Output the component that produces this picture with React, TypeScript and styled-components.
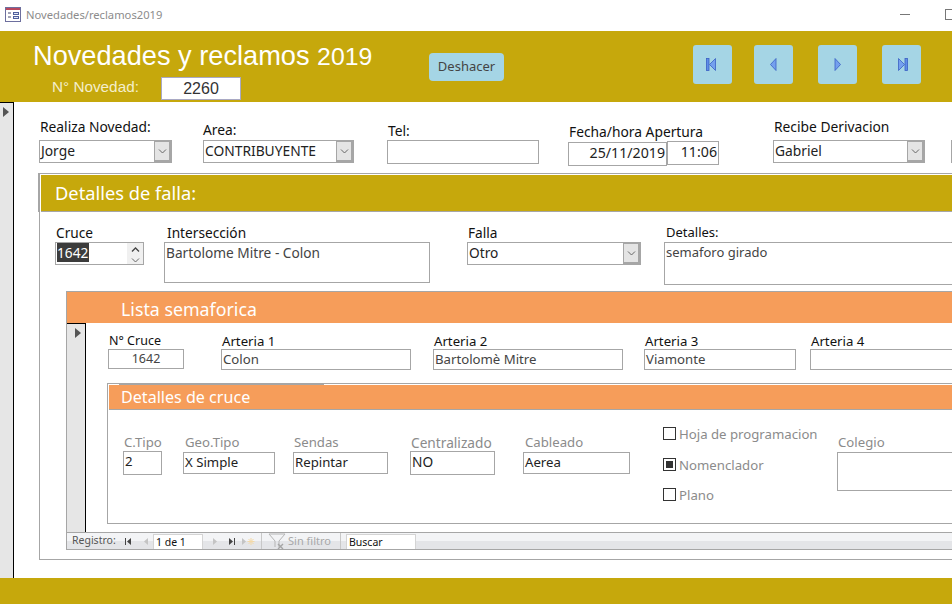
import * as React from 'react';
import styled, { createGlobalStyle } from 'styled-components';

const GOLD = '#c6a80c';
const ORANGE = '#f69d5a';
const LINE = '#a6a6a6';
const UI_FONT = '"Noto Sans", "Open Sans", sans-serif';

const GlobalStyle = createGlobalStyle`
  html, body {
    margin: 0;
    padding: 0;
    background: #fff;
  }
  body {
    font-family: ${UI_FONT};
  }
`;

const Page = styled.div`
  width: 952px;
  height: 604px;
  display: flex;
  flex-direction: column;
  overflow: hidden;
`;

const TitleBar = styled.div`
  height: 31px;
  flex: none;
  box-sizing: border-box;
  display: flex;
  align-items: center;
  padding: 0 0 3px 5px;
  gap: 5px;
`;

const TitleText = styled.span`
  font-size: 11.2px;
  color: #8c8c8c;
  flex: 1;
`;

const MinGlyph = styled.span`
  width: 10px;
  height: 1px;
  background: #777;
  margin-right: 30px;
`;

const MaxGlyph = styled.span`
  width: 10px;
  height: 9px;
  flex: none;
  border: 1px solid #777;
  margin-right: -5px;
`;

const Header = styled.div`
  height: 71px;
  flex: none;
  background: ${GOLD};
  display: flex;
  align-items: flex-start;
  padding-left: 33px;
`;

const TitleBlock = styled.div`
  width: 396px;
  flex: none;
`;

const Heading = styled.h1`
  margin: 10px 0 0;
  font: 400 27.2px/30px "Liberation Sans", Arial, sans-serif;
  color: #fff;
  white-space: nowrap;
`;

const HeadingYear = styled.span`
  font-size: 24.8px;
`;

const NumberRow = styled.div`
  display: flex;
  align-items: flex-start;
  margin: 5px 0 0 19px;
`;

const NumberLabel = styled.span`
  width: 109px;
  font: 400 15.3px/20px "Liberation Sans", Arial, sans-serif;
  color: #f4eecb;
`;

const NumberBox = styled.div`
  width: 80px;
  height: 23px;
  box-sizing: border-box;
  background: #fff;
  border: 1px solid #a9a9c4;
  text-align: center;
  font: 400 16px/21px "Liberation Sans", Arial, sans-serif;
  color: #333;
`;

const UndoButton = styled.div`
  width: 75px;
  height: 28px;
  margin-top: 22px;
  background: #a5d5e5;
  border-radius: 4px;
  text-align: center;
  font-size: 13px;
  line-height: 27px;
  color: #444;
`;

const NavButtons = styled.div`
  display: flex;
  margin: 14px 0 0 189px;
`;

const NavButton = styled.div<{ $gap: number }>`
  width: 39px;
  height: 39px;
  margin-left: ${(p) => p.$gap}px;
  background: #a5d5e5;
  border-radius: 3px;
  display: flex;
  align-items: center;
  justify-content: center;
`;

const NavSvg = styled.svg<{ $mirror: boolean; $nudge: number }>`
  transform: translateX(${(p) => p.$nudge}px) scaleX(${(p) => (p.$mirror ? -1 : 1)});
`;

const Main = styled.div`
  flex: 1;
  display: flex;
  min-height: 0;
`;

const RecordSelector = styled.div<{ $w: number }>`
  width: ${(p) => p.$w}px;
  flex: none;
  box-sizing: border-box;
  background: #e6e6e6;
  border-top: 1px solid #000;
  border-right: 1px solid #000;
  padding: 4px 0 0 ${(p) => (p.$w > 14 ? 8 : 3)}px;
`;

const Arrow = styled.div`
  width: 0;
  height: 0;
  border-left: 6px solid #555;
  border-top: 5px solid transparent;
  border-bottom: 5px solid transparent;
`;

const Content = styled.div`
  flex: 1;
  min-width: 0;
`;

const Row = styled.div<{ $h: number; $size: number }>`
  height: ${(p) => p.$h}px;
  display: flex;
  align-items: flex-start;
  font-size: ${(p) => p.$size}px;
`;

const Field = styled.div<{ $left: number; $top: number; $w: number; $size?: number }>`
  width: ${(p) => p.$w}px;
  flex: none;
  margin-left: ${(p) => p.$left}px;
  margin-top: ${(p) => p.$top}px;
  ${(p) => (p.$size ? `font-size: ${p.$size}px;` : '')}
`;

const Caption = styled.div<{ $inset?: number; $drop?: number; $muted?: boolean }>`
  line-height: 16px;
  height: 16px;
  white-space: nowrap;
  padding-left: ${(p) => p.$inset ?? 1}px;
  margin-bottom: ${(p) => p.$drop ?? 0}px;
  color: ${(p) => (p.$muted ? '#8b8b8b' : '#111')};
`;

const TextBox = styled.div<{ $h: number; $lh?: number; $dark?: boolean; $center?: boolean; $right?: boolean }>`
  height: ${(p) => p.$h}px;
  box-sizing: border-box;
  border: 1px solid ${LINE};
  background: #fff;
  padding: 0 1px;
  line-height: ${(p) => p.$lh ?? 20}px;
  white-space: nowrap;
  overflow: hidden;
  color: ${(p) => (p.$dark ? '#222' : '#444')};
  text-align: ${(p) => (p.$center ? 'center' : p.$right ? 'right' : 'left')};
`;

const ComboBox = styled.div`
  height: 23px;
  box-sizing: border-box;
  border: 1px solid ${LINE};
  background: #fff;
  display: flex;
  line-height: 19px;
  color: #222;
`;

const ComboValue = styled.div`
  flex: 1;
  padding-left: 1px;
  white-space: nowrap;
  overflow: hidden;
`;

const ComboDrop = styled.div`
  width: 17px;
  flex: none;
  box-sizing: border-box;
  border: 1px solid ${LINE};
  background: #e4e4e4;
  display: flex;
  align-items: center;
  justify-content: center;
  box-shadow: inset -1px -1px 0 ${LINE};
`;

const DateGroup = styled.div`
  display: flex;
  align-items: flex-start;
  font-size: 14.2px;
`;

const DatePart = styled.div<{ $w: number; $drop: number }>`
  width: ${(p) => p.$w}px;
  flex: none;
  margin-top: ${(p) => p.$drop}px;
`;

const Panel = styled.div`
  position: relative;
  width: 1000px;
  height: 387px;
  margin-left: 25px;
  box-sizing: border-box;
  border-top: 1px solid ${LINE};
  border-left: 1px solid ${LINE};
  border-bottom: 1px solid ${LINE};
  padding-top: 1px;

  &::before {
    content: '';
    position: absolute;
    left: -2px;
    top: -1px;
    width: 1px;
    height: 39px;
    background: ${LINE};
  }
`;

const PanelHeader = styled.div`
  height: 37px;
  box-sizing: border-box;
  background: ${GOLD};
  border-bottom: 1px solid ${LINE};
  margin-left: 1px;
  padding-left: 14px;
  font-size: 18.3px;
  line-height: 36px;
  color: #fff;
`;

const SpinBox = styled.div`
  height: 23px;
  box-sizing: border-box;
  border: 1px solid ${LINE};
  display: flex;
  align-items: flex-start;
  line-height: 19px;
  padding-left: 1px;
`;

const Selected = styled.span`
  width: 32px;
  height: 19px;
  background: #3c3c3c;
  color: #fff;
`;

const Spin = styled.div`
  width: 16px;
  height: 21px;
  margin-left: auto;
  background: #f0f0f0;
  display: flex;
  flex-direction: column;
  align-items: center;
  justify-content: space-between;
  padding: 4px 0 1px;
  box-sizing: border-box;
`;

const SubForm = styled.div`
  margin-left: 26px;
  border-top: 1px solid ${LINE};
  border-left: 1px solid ${LINE};
  height: 258px;
  display: flex;
  flex-direction: column;
`;

const SubHeader = styled.div`
  height: 31px;
  flex: none;
  background: ${ORANGE};
  padding-left: 54px;
  font-size: 17.8px;
  line-height: 34px;
  color: #fff;
`;

const SubBody = styled.div`
  height: 209px;
  flex: none;
  display: flex;
`;

const CrossPanel = styled.div`
  width: 900px;
  height: 141px;
  margin-left: 21px;
  box-sizing: border-box;
  border-top: 1px solid ${LINE};
  border-left: 1px solid ${LINE};
  border-bottom: 1px solid ${LINE};
  padding-top: 1px;
`;

const CrossHeader = styled.div`
  position: relative;
  height: 25px;
  margin-left: 1px;
  box-sizing: border-box;
  background: ${ORANGE};
  border-bottom: 1px solid ${LINE};
  padding-left: 12px;
  font-size: 16.1px;
  line-height: 24px;
  color: #fff;

  &::before {
    content: '';
    position: absolute;
    left: 10px;
    top: -1px;
    width: 205px;
    height: 1px;
    background: ${LINE};
  }
`;

const CheckColumn = styled.div`
  width: 174px;
  flex: none;
  margin: 17px 0 0 33px;
  display: flex;
  flex-direction: column;
  gap: 17px;
`;

const CheckRow = styled.div`
  height: 13.5px;
  display: flex;
  align-items: center;
  gap: 3px;
  color: #8b8b8b;
  white-space: nowrap;
`;

const CheckLabel = styled.span`
  margin-top: 1px;
`;

const CheckBox = styled.span<{ $on?: boolean }>`
  width: 13px;
  height: 13px;
  flex: none;
  box-sizing: border-box;
  border: 1px solid #333;
  display: flex;
  align-items: center;
  justify-content: center;

  &::after {
    content: '';
    width: 7px;
    height: 7px;
    background: ${(p) => (p.$on ? '#333' : 'transparent')};
  }
`;

const RecordBar = styled.div`
  height: 18px;
  flex: none;
  box-sizing: border-box;
  display: flex;
  align-items: flex-end;
  border-top: 1px solid ${LINE};
  border-bottom: 1px solid ${LINE};
  background: linear-gradient(#f3f4f6 0 50%, #e4e5e8 50% 100%);
  font-size: 10.5px;
  line-height: 15px;
  color: #555;
`;

const BarLabel = styled.span`
  margin-left: 5px;
  width: 52px;
  flex: none;
  height: 16px;
`;

const BarIcon = styled.span<{ $w: number; $left?: number }>`
  width: ${(p) => p.$w}px;
  margin-left: ${(p) => p.$left ?? 0}px;
  flex: none;
  height: 16px;
  display: flex;
  align-items: center;
  justify-content: center;
`;

const BarInput = styled.div<{ $w: number; $left: number }>`
  width: ${(p) => p.$w}px;
  height: 15px;
  flex: none;
  box-sizing: border-box;
  margin-left: ${(p) => p.$left}px;
  background: #fff;
  border: 1px solid #d4d4d4;
  border-bottom: 0;
  padding-left: 2px;
  line-height: 14px;
  color: #111;
`;

const BarSeparator = styled.span<{ $left: number }>`
  width: 1px;
  height: 16px;
  flex: none;
  margin-left: ${(p) => p.$left}px;
  background: #c8c8c8;
`;

const BarMuted = styled.span`
  width: 52px;
  margin-left: 1px;
  flex: none;
  height: 16px;
  font-size: 11px;
  color: #a8a8a8;
`;

const BottomBand = styled.div`
  height: 26px;
  flex: none;
  background: ${GOLD};
`;

const FormIcon = () => (
  <svg width="16" height="15" viewBox="0 0 16 15">
    <rect x="0.5" y="0.5" width="15" height="14" fill="#fff" stroke="#6d6f9e" />
    <rect x="1" y="1" width="14" height="2" fill="#b8475f" />
    <path d="M3 6h3M3 10h3" stroke="#45476f" />
    <rect x="8.5" y="5.5" width="5" height="2" fill="#dfe6f5" stroke="#4f5f9c" />
    <rect x="8.5" y="9.5" width="5" height="2" fill="#dfe6f5" stroke="#4f5f9c" />
  </svg>
);

type NavKind = 'first' | 'prev' | 'next' | 'last';

const NAV_NUDGE: Record<NavKind, number> = { first: -2, prev: -1, next: 0, last: 1 };

// triangle and bar of the big blue record buttons, drawn pointing left and mirrored when needed
const NavGlyph = ({ kind }: { kind: NavKind }) => {
  const mirrored = kind === 'next' || kind === 'last';
  const barred = kind === 'first' || kind === 'last';
  return (
    <NavSvg width="10" height="13" viewBox="0 0 10 13" $mirror={mirrored} $nudge={NAV_NUDGE[kind]}>
      {barred && <rect x="0.5" y="0.5" width="2.5" height="12" fill="#5f8ee8" stroke="#3a5fc4" strokeWidth="0.8" />}
      <path
        d={barred ? 'M9.5 0.5V12.5L3.5 6.5Z' : 'M8 0.5V12.5L2.5 6.5Z'}
        fill="#74a0ee"
        stroke="#3a5fc4"
        strokeWidth="0.8"
      />
    </NavSvg>
  );
};

const Chevron = ({ up }: { up?: boolean }) => (
  <svg width="9" height="5" viewBox="0 0 9 5">
    <path d={up ? 'M1 4.5L4.5 1L8 4.5' : 'M1 0.5L4.5 4L8 0.5'} fill="none" stroke={up ? '#444' : '#666'} strokeWidth={up ? 1.3 : 1} />
  </svg>
);

const BarGlyph = ({ kind, faded }: { kind: NavKind; faded?: boolean }) => {
  const color = faded ? '#c4c4c4' : '#444';
  const d = {
    first: 'M1 1h1v7H1zM7 1v7L3 4.5z',
    prev: 'M6 1v7L2 4.5z',
    next: 'M2 1v7l4-3.5z',
    last: 'M7 1h1v7H7zM2 1v7l4-3.5z',
  }[kind];
  return (
    <svg width="9" height="9" viewBox="0 0 9 9">
      <path d={d} fill={color} />
    </svg>
  );
};

const NewGlyph = () => (
  <svg width="14" height="9" viewBox="0 0 14 9">
    <path d="M1 1v7l4-3.5z" fill="#c4c4c4" />
    <path d="M10 1v7M6.5 4.5h7M7.5 2l5 5M12.5 2l-5 5" stroke="#f3d9a8" />
  </svg>
);

const FilterGlyph = () => (
  <svg width="19" height="17" viewBox="0 0 19 17">
    <path d="M1 1h16l-6 7v6M7 14V8L1 1" fill="none" stroke="#b5b5b5" />
    <path d="M10 11l5 5M15 11l-5 5" stroke="#a5a5a5" strokeWidth="1.4" />
  </svg>
);

const Combo = ({ value }: { value: string }) => (
  <ComboBox>
    <ComboValue>{value}</ComboValue>
    <ComboDrop>
      <Chevron />
    </ComboDrop>
  </ComboBox>
);

export default function App() {
  return (
    <Page>
      <GlobalStyle />
      <TitleBar>
        <FormIcon />
        <TitleText>Novedades/reclamos2019</TitleText>
        <MinGlyph />
        <MaxGlyph />
      </TitleBar>

      <Header>
        <TitleBlock>
          <Heading>Novedades y reclamos <HeadingYear>2019</HeadingYear></Heading>
          <NumberRow>
            <NumberLabel>N° Novedad:</NumberLabel>
            <NumberBox>2260</NumberBox>
          </NumberRow>
        </TitleBlock>
        <UndoButton>Deshacer</UndoButton>
        <NavButtons>
          <NavButton $gap={0}><NavGlyph kind="first" /></NavButton>
          <NavButton $gap={22}><NavGlyph kind="prev" /></NavButton>
          <NavButton $gap={25}><NavGlyph kind="next" /></NavButton>
          <NavButton $gap={25}><NavGlyph kind="last" /></NavButton>
        </NavButtons>
      </Header>

      <Main>
        <RecordSelector $w={14}><Arrow /></RecordSelector>
        <Content>
          <Row $h={71} $size={13.8}>
            <Field $left={25} $top={17} $w={133}>
              <Caption $drop={5}>Realiza Novedad:</Caption>
              <Combo value="Jorge" />
            </Field>
            <Field $left={31} $top={20} $w={151}>
              <Caption $drop={2} $inset={0}>Area:</Caption>
              <Combo value="CONTRIBUYENTE" />
            </Field>
            <Field $left={33} $top={21} $w={152}>
              <Caption $drop={1}>Tel:</Caption>
              <TextBox $h={24} />
            </Field>
            <Field $left={29} $top={22} $w={151}>
              <Caption $drop={1}>Fecha/hora Apertura</Caption>
              <DateGroup>
                <DatePart $w={99} $drop={1}><TextBox $h={24} $dark $right>25/11/2019</TextBox></DatePart>
                <DatePart $w={52} $drop={0}><TextBox $h={24} $dark $right>11:06</TextBox></DatePart>
              </DateGroup>
            </Field>
            <Field $left={54} $top={17} $w={152}>
              <Caption $drop={5}>Recibe Derivacion</Caption>
              <Combo value="Gabriel" />
            </Field>
            <Field $left={26} $top={38} $w={20}>
              <TextBox $h={23} />
            </Field>
          </Row>

          <Panel>
            <PanelHeader>Detalles de falla:</PanelHeader>
            <Row $h={79} $size={13.7}>
              <Field $left={15} $top={13} $w={89}>
                <Caption $drop={1}>Cruce</Caption>
                <SpinBox>
                  <Selected>1642</Selected>
                  <Spin>
                    <Chevron up />
                    <Chevron />
                  </Spin>
                </SpinBox>
              </Field>
              <Field $left={20} $top={13} $w={266}>
                <Caption $drop={1} $inset={3}>Intersección</Caption>
                <TextBox $h={41}>Bartolome Mitre - Colon</TextBox>
              </Field>
              <Field $left={37} $top={13} $w={174}>
                <Caption $drop={1}>Falla</Caption>
                <Combo value="Otro" />
              </Field>
              <Field $left={23} $top={12} $w={400} $size={13}>
                <Caption $drop={2} $inset={2}>Detalles:</Caption>
                <TextBox $h={43} $lh={18}>semaforo girado</TextBox>
              </Field>
            </Row>

            <SubForm>
              <SubHeader>Lista semaforica</SubHeader>
              <SubBody>
                <RecordSelector $w={19}><Arrow /></RecordSelector>
                <Content>
                  <Row $h={60} $size={13.2}>
                    <Field $left={22} $top={10} $w={76} $size={12.5}>
                      <Caption>N° Cruce</Caption>
                      <TextBox $h={20} $lh={18} $center>1642</TextBox>
                    </Field>
                    <Field $left={37} $top={10} $w={190}>
                      <Caption>Arteria 1</Caption>
                      <TextBox $h={21} $lh={18}>Colon</TextBox>
                    </Field>
                    <Field $left={22} $top={10} $w={190}>
                      <Caption>Arteria 2</Caption>
                      <TextBox $h={21} $lh={18}>Bartolomè Mitre</TextBox>
                    </Field>
                    <Field $left={21} $top={10} $w={152}>
                      <Caption>Arteria 3</Caption>
                      <TextBox $h={21} $lh={18}>Viamonte</TextBox>
                    </Field>
                    <Field $left={14} $top={10} $w={200}>
                      <Caption>Arteria 4</Caption>
                      <TextBox $h={21} />
                    </Field>
                  </Row>

                  <CrossPanel>
                    <CrossHeader>Detalles de cruce</CrossHeader>
                    <Row $h={113} $size={13.2}>
                      <Field $left={15} $top={24} $w={39}>
                        <Caption $muted $drop={1}>C.Tipo</Caption>
                        <TextBox $h={24} $lh={18} $dark>2</TextBox>
                      </Field>
                      <Field $left={21} $top={24} $w={92}>
                        <Caption $muted $drop={2} $inset={2}>Geo.Tipo</Caption>
                        <TextBox $h={22} $lh={18} $dark>X Simple</TextBox>
                      </Field>
                      <Field $left={18} $top={24} $w={95}>
                        <Caption $muted $drop={2}>Sendas</Caption>
                        <TextBox $h={22} $lh={18} $dark>Repintar</TextBox>
                      </Field>
                      <Field $left={22} $top={25} $w={85} $size={13.7}>
                        <Caption $muted>Centralizado</Caption>
                        <TextBox $h={24} $dark>NO</TextBox>
                      </Field>
                      <Field $left={28} $top={24} $w={107}>
                        <Caption $muted $drop={2} $inset={2}>Cableado</Caption>
                        <TextBox $h={22} $lh={18} $dark>Aerea</TextBox>
                      </Field>
                      <CheckColumn>
                        <CheckRow><CheckBox /><CheckLabel>Hoja de programacion</CheckLabel></CheckRow>
                        <CheckRow><CheckBox $on /><CheckLabel>Nomenclador</CheckLabel></CheckRow>
                        <CheckRow><CheckBox /><CheckLabel>Plano</CheckLabel></CheckRow>
                      </CheckColumn>
                      <Field $left={0} $top={24} $w={200}>
                        <Caption $muted $drop={2}>Colegio</Caption>
                        <TextBox $h={39} />
                      </Field>
                    </Row>
                  </CrossPanel>
                </Content>
              </SubBody>
              <RecordBar>
                <BarLabel>Registro:</BarLabel>
                <BarIcon $w={9}><BarGlyph kind="first" /></BarIcon>
                <BarIcon $w={9} $left={9}><BarGlyph kind="prev" faded /></BarIcon>
                <BarInput $w={50} $left={2}>1 de 1</BarInput>
                <BarIcon $w={9} $left={8}><BarGlyph kind="next" faded /></BarIcon>
                <BarIcon $w={9} $left={7}><BarGlyph kind="last" /></BarIcon>
                <BarIcon $w={14} $left={5}><NewGlyph /></BarIcon>
                <BarSeparator $left={6} />
                <BarIcon $w={19} $left={6}><FilterGlyph /></BarIcon>
                <BarMuted>Sin filtro</BarMuted>
                <BarSeparator $left={0} />
                <BarInput $w={70} $left={5}>Buscar</BarInput>
              </RecordBar>
            </SubForm>
          </Panel>
        </Content>
      </Main>

      <BottomBand />
    </Page>
  );
}
